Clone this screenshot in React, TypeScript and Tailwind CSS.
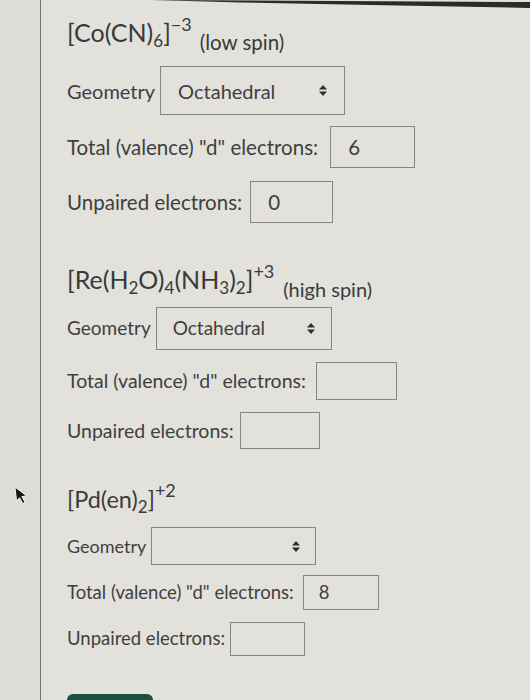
function SelectArrows() {
  return (
    <svg width="10" height="13" viewBox="0 0 10 13" className="shrink-0">
      <path d="M1 5.5 L5 1 L9 5.5 Z" fill="#2f2f2f" />
      <path d="M1 7.5 L5 12 L9 7.5 Z" fill="#2f2f2f" />
    </svg>
  );
}

function Cursor() {
  return (
    <svg width="16" height="20" viewBox="0 0 16 20">
      <path d="M2 1 L3.5 15 L6.5 11.8 L9.8 17.5 L12 16.2 L8.8 10.6 L13.5 9.8 Z" fill="#161616" stroke="#f4f4f2" strokeWidth="1" />
    </svg>
  );
}

function Sub({ size, children }: { size: string; children: React.ReactNode }) {
  return <span className={size + " align-[-5px]"}>{children}</span>;
}

export default function App() {
  return (
    <div className="w-[530px] h-[700px] overflow-hidden bg-[#e2e1dc] flex font-['Lato',sans-serif] text-[#3f3f3f]">
      <div className="w-[41px] shrink-0 bg-[#dedcd6] border-r border-[#75746f] flex flex-col">
        <div className="h-[486px]" />
        <div className="pl-[13px]">
          <Cursor />
        </div>
      </div>
      <div className="flex-1 flex flex-col">
        <svg width="489" height="8" viewBox="0 0 489 8" className="shrink-0">
          <path d="M110 0 L489 2 L489 8 L330 5 L200 2.5 Z" fill="#2b2b2c" />
        </svg>

        <div className="pl-[26px] flex flex-col">
          {/* Co(CN)6 */}
          <div className="h-[32px] mt-[16px] flex items-end gap-[8px] text-[#3a3a3a]">
            <span className="text-[25px] leading-[30px] whitespace-nowrap">
              [Co(CN)<Sub size="text-[17px]">6</Sub>]<span className="text-[18px] align-[11px]">−3</span>
            </span>
            <span className="text-[20.5px] leading-[28px]">(low spin)</span>
          </div>
          <div className="flex items-center gap-[5px] mt-[10px] text-[20px]">
            <span>Geometry</span>
            <div className="w-[185px] h-[49px] border-[1.5px] border-[#86857f] flex items-center justify-between pl-[17px] pr-[16px]">
              <span>Octahedral</span>
              <SelectArrows />
            </div>
          </div>
          <div className="flex items-center gap-[12px] mt-[11px] text-[20.5px]">
            <span>Total (valence) "d" electrons:</span>
            <div className="w-[85px] h-[42px] border-[1.5px] border-[#86857f] flex items-center pl-[17px]">6</div>
          </div>
          <div className="flex items-center gap-[8px] mt-[13px] text-[20.5px]">
            <span>Unpaired electrons:</span>
            <div className="w-[83px] h-[42px] border-[1.5px] border-[#86857f] flex items-center pl-[17px]">0</div>
          </div>

          {/* Re(H2O)4(NH3)2 */}
          <div className="h-[32px] mt-[48px] flex items-end gap-[9px] text-[#3a3a3a]">
            <span className="text-[25px] leading-[30px] whitespace-nowrap">
              [Re(H<Sub size="text-[17px]">2</Sub>O)<Sub size="text-[17px]">4</Sub>(NH<Sub size="text-[17px]">3</Sub>)
              <Sub size="text-[17px]">2</Sub>]<span className="text-[18px] align-[11px]">+3</span>
            </span>
            <span className="text-[20px] leading-[27px]">(high spin)</span>
          </div>
          <div className="flex items-center gap-[5px] mt-[4px] text-[19px]">
            <span>Geometry</span>
            <div className="w-[176px] h-[43px] border-[1.5px] border-[#86857f] flex items-center justify-between pl-[16px] pr-[15px]">
              <span>Octahedral</span>
              <SelectArrows />
            </div>
          </div>
          <div className="flex items-center gap-[10px] mt-[12px] text-[19.5px]">
            <span>Total (valence) "d" electrons:</span>
            <div className="w-[81px] h-[38px] border-[1.5px] border-[#86857f]" />
          </div>
          <div className="flex items-center gap-[6px] mt-[12px] text-[19.5px]">
            <span>Unpaired electrons:</span>
            <div className="w-[80px] h-[37px] border-[1.5px] border-[#86857f]" />
          </div>

          {/* Pd(en)2 */}
          <div className="h-[32px] mt-[41px] flex items-end text-[#3a3a3a]">
            <span className="text-[23.5px] leading-[30px] whitespace-nowrap">
              [Pd(en)<Sub size="text-[17px]">2</Sub>]<span className="text-[18px] align-[11px]">+2</span>
            </span>
          </div>
          <div className="flex items-center gap-[5px] mt-[5px] text-[18px]">
            <span>Geometry</span>
            <div className="w-[165px] h-[38px] border-[1.5px] border-[#86857f] flex items-center justify-end pr-[14px]">
              <SelectArrows />
            </div>
          </div>
          <div className="flex items-center gap-[9px] mt-[10px] text-[18.5px]">
            <span>Total (valence) "d" electrons:</span>
            <div className="w-[76px] h-[35px] border-[1.5px] border-[#86857f] flex items-center pl-[15px]">8</div>
          </div>
          <div className="flex items-center gap-[5px] mt-[12px] text-[18.5px]">
            <span>Unpaired electrons:</span>
            <div className="w-[75px] h-[34px] border-[1.5px] border-[#86857f]" />
          </div>

          <div className="mt-[38px] w-[86px] h-[30px] shrink-0 rounded-t-[6px] bg-[#1d4e42]" />
        </div>
      </div>
    </div>
  );
}
